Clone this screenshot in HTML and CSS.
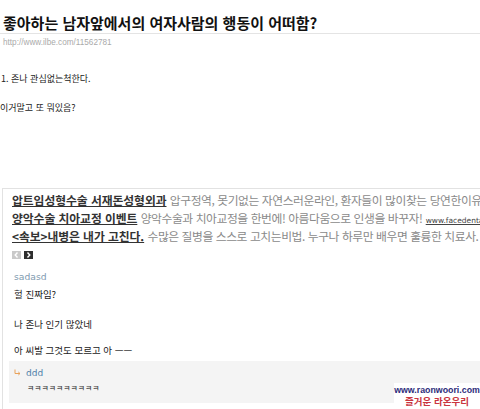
FILE: index.html
```html
<!DOCTYPE html>
<html lang="ko">
<head>
<meta charset="utf-8">
<link rel="stylesheet" href="styles.css">
</head>
<body>
<div class="page">
  <h1 class="title">좋아하는 남자앞에서의 여자사람의 행동이 어떠함?</h1>
  <div class="url">http://www.ilbe.com/11562781</div>
  <p class="para p1">1. 존나 관심없는척한다.</p>
  <p class="para p2">이거말고 또 뭐있음?</p>

  <div class="box">
    <ul class="ads">
      <li><a class="adlink">압트임성형수술 서재돈성형외과</a> <span class="addesc">압구정역, 못기없는 자연스러운라인, 환자들이 많이찾는 당연한이유</span> <span class="adurl">www.seojaedon.com</span></li>
      <li><a class="adlink">양악수술 치아교정 이벤트</a> <span class="addesc">양악수술과 치아교정을 한번에! 아름다움으로 인생을 바꾸자!</span> <span class="adurl">www.facedental.co.kr</span></li>
      <li><a class="adlink">&lt;속보&gt;내병은 내가 고친다.</a> <span class="addesc">수많은 질병을 스스로 고치는비법. 누구나 하루만 배우면 훌륭한 치료사.</span> <span class="adurl">www.healing.co.kr</span></li>
    </ul>
    <div class="pager">
      <span class="pbtn prev"><svg width="9" height="8" viewBox="0 0 9 8"><path d="M5.5 1.5 L3.2 4 L5.5 6.5" fill="none" stroke="#fff" stroke-width="1.4"/></svg></span>
      <span class="pbtn next"><svg width="9" height="8" viewBox="0 0 9 8"><path d="M3.5 1.5 L5.8 4 L3.5 6.5" fill="none" stroke="#fff" stroke-width="1.4"/></svg></span>
    </div>

    <div class="comment">
      <div class="author">sadasd</div>
      <p class="ctext c1">헐 진짜임?</p>
      <p class="ctext c2">나 존나 인기 많았네</p>
      <p class="ctext c3">아 씨발 그것도 모르고 아 ㅡㅡ</p>
    </div>

    <div class="reply">
      <div class="rhead">
        <svg class="rarrow" width="7" height="7" viewBox="0 0 7 7"><path d="M1 0.5 V4.5 H6 M4.3 3 L6 4.5 L4.3 6" fill="none" stroke="#e9a25a" stroke-width="1"/></svg>
        <span class="rauthor">ddd</span>
      </div>
      <p class="rtext">ㅋㅋㅋㅋㅋㅋㅋㅋㅋㅋ</p>
    </div>
  </div>

  <div class="watermark">
    <div class="wm1">www.raonwoori.com</div>
    <div class="wm2">즐거운 라온우리</div>
  </div>
</div>
</body>
</html>
```

FILE: styles.css
```css
html, body {
  margin: 0;
  padding: 0;
  background: #fff;
}
body {
  font-family: "Noto Sans CJK KR", "Noto Sans", sans-serif;
  color: #222;
  overflow: hidden;
}
.page {
  position: relative;
  width: 480px;
  height: 409px;
  overflow: hidden;
}
.title {
  margin: 0;
  padding: 15px 0 2px 3px;
  height: 16px;
  line-height: 16px;
  font-size: 15px;
  font-weight: bold;
  color: #111;
  border-bottom: 1px solid #e4e4e4;
  white-space: nowrap;
}
.url {
  margin-top: 3px;
  padding-left: 3px;
  height: 12px;
  line-height: 12px;
  font-family: "Liberation Sans", Arial, sans-serif;
  font-size: 8.2px;
  color: #aaa;
}
.para {
  margin: 0;
  height: 14px;
  line-height: 14px;
  font-size: 9px;
  color: #222;
  white-space: nowrap;
}
.p1 { margin-top: 23px; padding-left: 1px; }
.p2 { margin-top: 15px; }

.box {
  margin-top: 73px;
  margin-left: 2px;
  border-top: 1px solid #e2e2e2;
  border-left: 1px solid #e2e2e2;
  padding-left: 9px;
  height: 240px;
}
.ads {
  list-style: none;
  margin: 0;
  padding: 2px 0 0 0;
}
.ads li {
  height: 18px;
  line-height: 18px;
  white-space: nowrap;
  overflow: hidden;
  font-size: 11.8px;
}
.adlink {
  color: #333;
  font-weight: bold;
  text-decoration: underline;
  letter-spacing: -0.05px;
}
.addesc {
  color: #8a8a8a;
  letter-spacing: -0.43px;
}
.adurl {
  font-family: "DejaVu Sans", sans-serif;
  font-size: 7.5px;
  color: #444;
  text-decoration: underline;
  letter-spacing: 0;
}
.pager {
  display: flex;
  gap: 3px;
  margin-top: 6px;
  padding-left: 0;
  height: 9px;
}
.pbtn {
  display: flex;
  width: 9px;
  height: 8px;
}
.prev { background: #c9c9c9; }
.next { background: #2e2e2e; }

.comment {
  padding-left: 2px;
}
.author {
  margin-top: 10px;
  height: 14px;
  line-height: 14px;
  font-family: "DejaVu Sans", sans-serif;
  font-size: 9.2px;
  color: #7f9bb0;
}
.ctext {
  margin: 0;
  height: 14px;
  line-height: 14px;
  font-size: 9.5px;
  color: #222;
  white-space: nowrap;
}
.c1 { margin-top: 3px; }
.c2 { margin-top: 16px; }
.c3 { margin-top: 12px; }

.reply {
  margin-top: 4px;
  margin-left: -3px;
  background: #f4f4f4;
  height: 42px;
  padding-left: 5px;
}
.rhead {
  display: flex;
  align-items: center;
  gap: 5px;
  padding-top: 5px;
  height: 14px;
}
.rarrow {
  margin-top: -1px;
}
.rauthor {
  font-family: "DejaVu Sans", sans-serif;
  font-size: 9px;
  color: #4f7fa8;
  line-height: 14px;
}
.rtext {
  margin: 3px 0 0 13px;
  font-size: 7.9px;
  line-height: 10px;
  color: #333;
  white-space: nowrap;
}

.watermark {
  position: absolute;
  left: 394px;
  top: 383px;
  width: 86px;
  height: 26px;
  background: #fff;
  text-align: center;
}
.wm1 {
  margin-top: 2px;
  font-family: "Liberation Sans", Arial, sans-serif;
  font-weight: bold;
  font-size: 8.8px;
  line-height: 10px;
  color: #2c2c7a;
}
.wm2 {
  font-size: 9.5px;
  line-height: 12px;
  font-weight: bold;
  color: #c9353f;
}
```
